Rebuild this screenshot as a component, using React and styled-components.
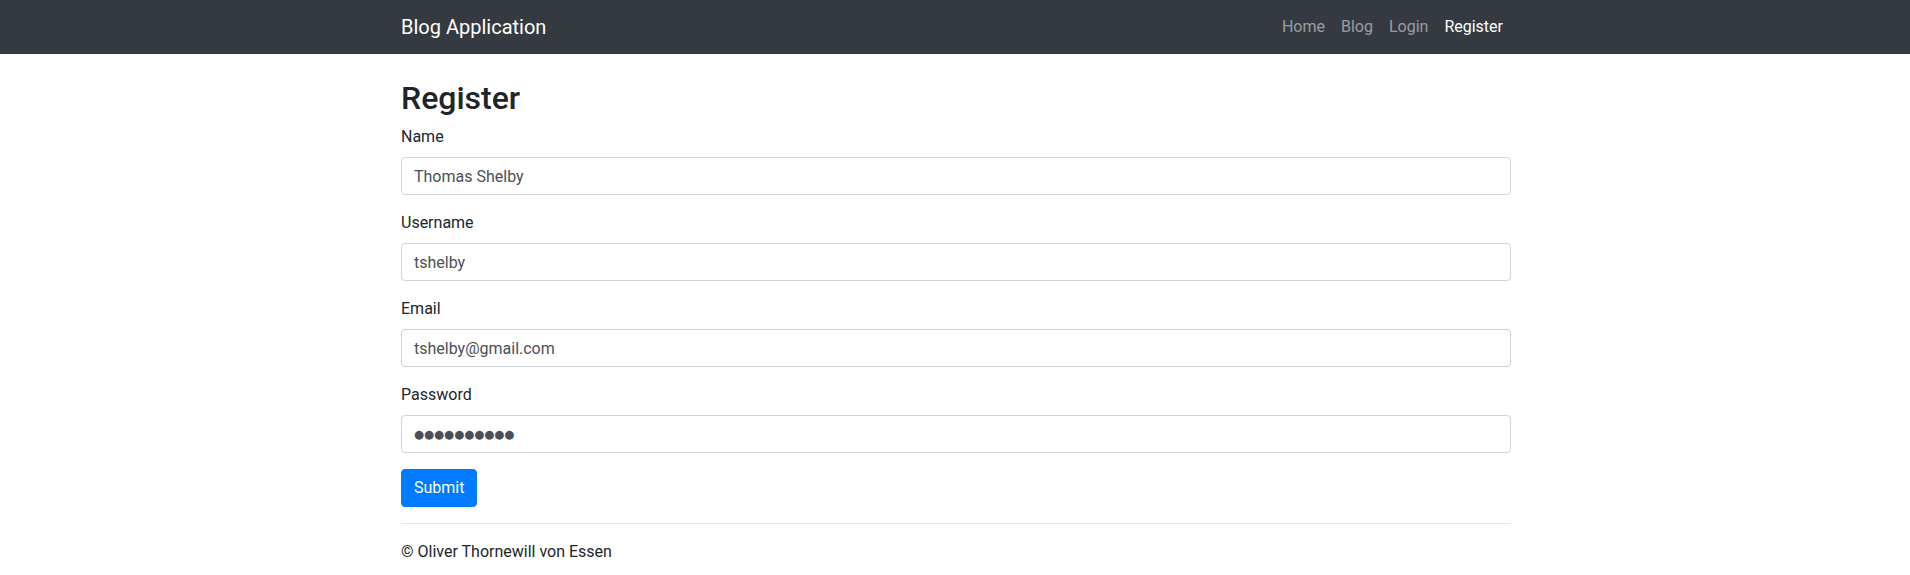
import React from "react";
import styled, { createGlobalStyle } from "styled-components";

const Global = createGlobalStyle`
  *, *::before, *::after { box-sizing: border-box; }
  body {
    margin: 0;
    font-family: Roboto, "Helvetica Neue", Arial, sans-serif;
    font-size: 16px;
    line-height: 1.5;
    color: #212529;
    background: #fff;
  }
`;

const Navbar = styled.nav`
  background: #343a40;
  height: 54px;
  display: flex;
  align-items: center;
`;

const Container = styled.div`
  width: 1140px;
  margin: 0 auto;
  padding: 0 14px 0 16px;
`;

const NavInner = styled(Container)`
  display: flex;
  align-items: center;
  justify-content: space-between;
`;

const Brand = styled.a`
  color: #fff;
  font-size: 20px;
  line-height: 30px;
  text-decoration: none;
`;

const NavList = styled.div`
  display: flex;
`;

const NavLink = styled.a`
  padding: 8px;
  color: ${(p) => (p.$active ? "#fff" : "rgba(255,255,255,.5)")};
  text-decoration: none;
  line-height: 24px;
`;

const Main = styled(Container)`
  padding-top: 25px;
`;

const Title = styled.h2`
  margin: 0 0 8px;
  font-size: 32px;
  font-weight: 500;
  line-height: 1.2;
`;

const Group = styled.div`
  margin-bottom: 16px;
`;

const Label = styled.label`
  display: block;
  margin-bottom: 8px;
`;

const Input = styled.input`
  display: block;
  width: 100%;
  height: 38px;
  padding: 6px 12px;
  font-family: ${(p) => (p.$masked ? '"DejaVu Sans", sans-serif' : "inherit")};
  font-size: ${(p) => (p.$masked ? "11.5px" : "16px")};
  line-height: 1.5;
  color: #495057;
  background: #fff;
  border: 1px solid #ced4da;
  border-radius: 4px;
  outline: none;
`;

const Button = styled.button`
  display: inline-block;
  padding: 6px 12px;
  font-family: inherit;
  font-size: 16px;
  line-height: 1.5;
  color: #fff;
  background: #007bff;
  border: 1px solid #007bff;
  border-radius: 4px;
`;

const Rule = styled.hr`
  margin: 16px 0;
  border: 0;
  border-top: 1px solid rgba(0, 0, 0, 0.1);
`;

const Footer = styled.p`
  margin: 0;
`;

const fields = [
  { label: "Name", value: "Thomas Shelby" },
  { label: "Username", value: "tshelby" },
  { label: "Email", value: "tshelby@gmail.com" },
  { label: "Password", value: "●●●●●●●●●●", masked: true },
];

export default function App() {
  return (
    <>
      <Global />
      <Navbar>
        <NavInner>
          <Brand href="#">Blog Application</Brand>
          <NavList>
            <NavLink href="#">Home</NavLink>
            <NavLink href="#">Blog</NavLink>
            <NavLink href="#">Login</NavLink>
            <NavLink href="#" $active>Register</NavLink>
          </NavList>
        </NavInner>
      </Navbar>
      <Main>
        <Title>Register</Title>
        <form onSubmit={(e) => e.preventDefault()}>
          {fields.map((f) => (
            <Group key={f.label}>
              <Label>{f.label}</Label>
              <Input type="text" $masked={f.masked} defaultValue={f.value} />
            </Group>
          ))}
          <Button type="submit">Submit</Button>
        </form>
        <Rule />
        <Footer>© Oliver Thornewill von Essen</Footer>
      </Main>
    </>
  );
}
